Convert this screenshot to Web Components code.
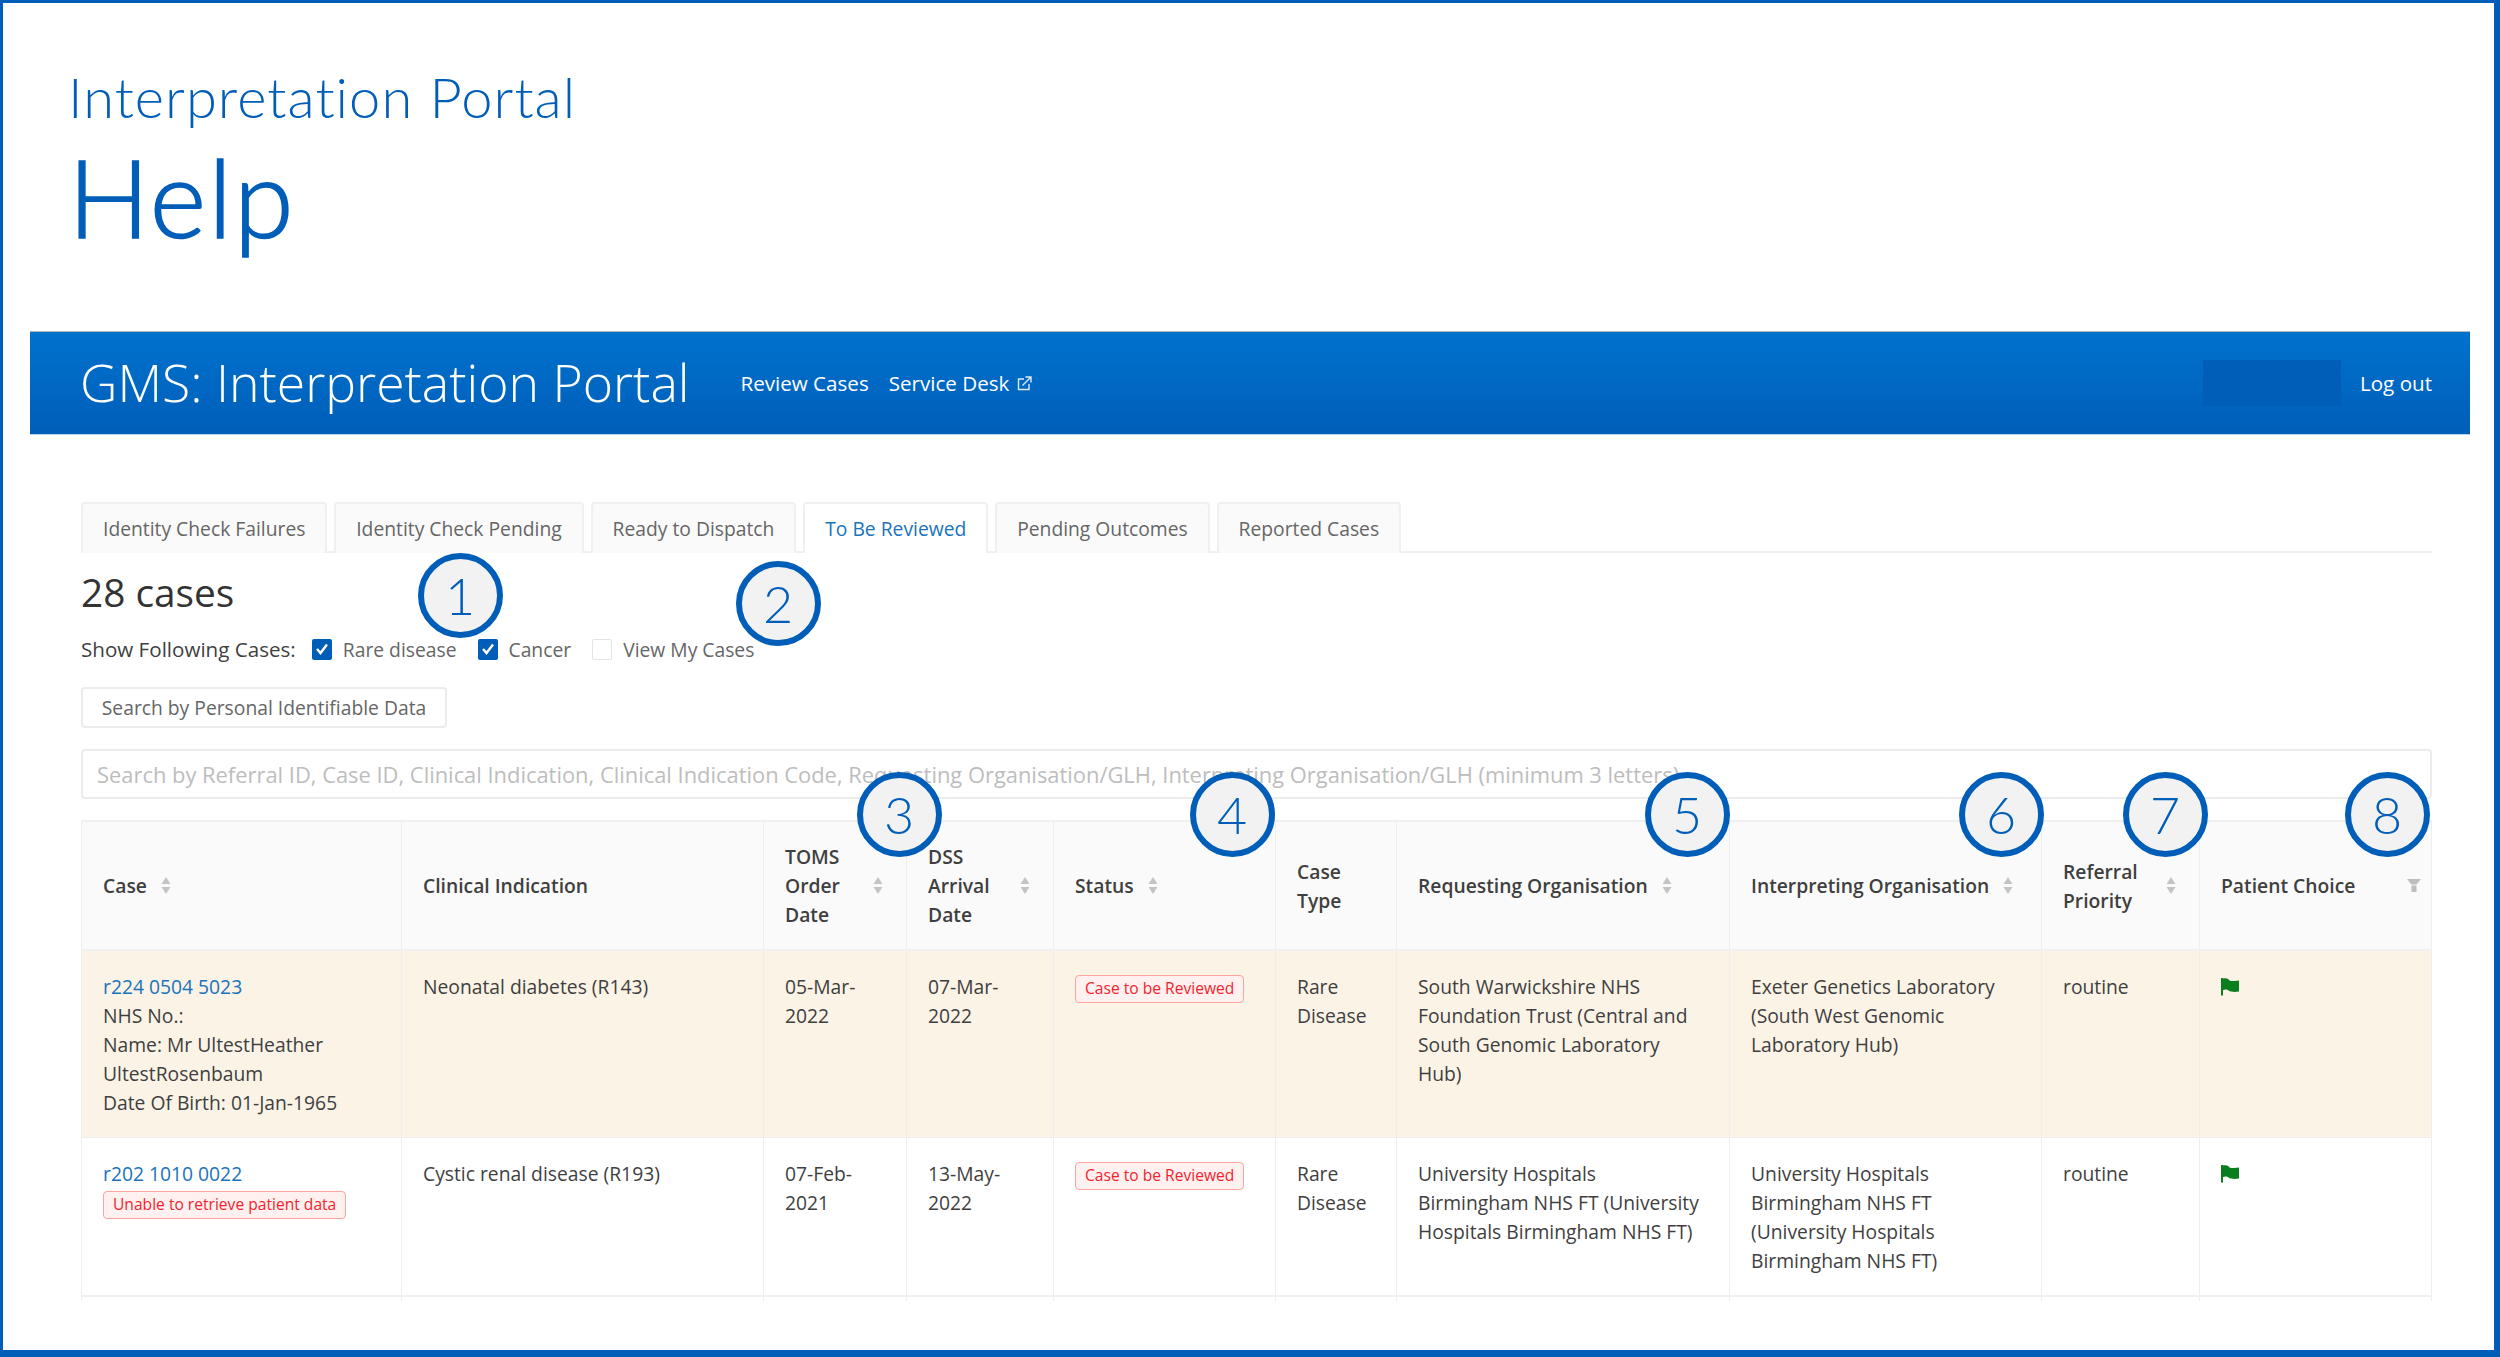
<!DOCTYPE html>
<html lang="en">
<head>
<meta charset="utf-8">
<title>Interpretation Portal Help</title>
<style>
  html, body { margin: 0; padding: 0; background: #fff; }
  body { font-family: "Open Sans", "Liberation Sans", sans-serif; color: #3f3f3f; }
</style>
</head>
<body>
<help-page>
  <help-title></help-title>
  <portal-nav></portal-nav>
  <case-tabs></case-tabs>
  <case-filters></case-filters>
  <case-table></case-table>

  <!-- numbered callouts sit over the screenshot -->
  <help-marker n="1" x="460" y="595"></help-marker>
  <help-marker n="2" x="778" y="603"></help-marker>
  <help-marker n="3" x="899" y="814"></help-marker>
  <help-marker n="4" x="1232" y="814"></help-marker>
  <help-marker n="5" x="1687" y="814"></help-marker>
  <help-marker n="6" x="2001" y="814"></help-marker>
  <help-marker n="7" x="2165" y="814"></help-marker>
  <help-marker n="8" x="2387" y="814"></help-marker>
</help-page>

<script>
class HelpPage extends HTMLElement {
    constructor() {
        super();
        this.attachShadow({ mode: 'open' });
    }
    connectedCallback() {
        this.shadowRoot.innerHTML = `
            <style>
                :host {
                    display: block;
                    position: relative;
                    box-sizing: border-box;
                    width: 2500px;
                    height: 1357px;
                    overflow: hidden;
                    border-style: solid;
                    border-color: #005eb8;
                    border-width: 3px 6px 7px 3px;
                    background: #fff;
                }
            </style>
            <slot></slot>
        `;
    }
}

class HelpTitle extends HTMLElement {
    constructor() {
        super();
        this.attachShadow({ mode: 'open' });
    }
    connectedCallback() {
        this.shadowRoot.innerHTML = `
            <style>
                :host {
                    display: block;
                    box-sizing: border-box;
                    height: 328px;
                    padding: 59px 0 0 68px;
                    color: #005eb8;
                    font-family: Lato, "Open Sans", sans-serif;
                    font-weight: 300;
                }
                div { white-space: nowrap; }
                .sub { font-size: 56px; line-height: 70px; letter-spacing: 1.05px; margin-left: -3px; }
                /* no Lato weight between light and regular, so the light one gets a thin stroke */
                .main { font-size: 108px; line-height: 118px; margin: 5px 0 0 -3px; letter-spacing: 2px; -webkit-text-stroke: 1.6px #005eb8; }
            </style>
            <div class="sub">Interpretation Portal</div>
            <div class="main">Help</div>
        `;
    }
}

class PortalNav extends HTMLElement {
    constructor() {
        super();
        this.attachShadow({ mode: 'open' });
    }
    connectedCallback() {
        this.shadowRoot.innerHTML = `
            <style>
                :host {
                    display: flex;
                    align-items: center;
                    box-sizing: border-box;
                    height: 104px;
                    margin: 0 24px 0 27px;
                    padding: 0 38px 0 50px;
                    color: #fff;
                    background: linear-gradient(#0072ce, #005eb8);
                    border-top: 1px solid #b4b9be;
                    border-bottom: 1px solid #b9d5ee;
                    font-family: "Open Sans", sans-serif;
                }
                .brand { font-size: 51.7px; font-weight: 300; white-space: nowrap; margin: -2px 51px 0 0; }
                .link { font-size: 20.6px; font-weight: 500; margin-right: 20px; white-space: nowrap; display: flex; align-items: center; gap: 8px; }
                .spacer { flex: 1; }
                .user { width: 138px; height: 46px; background: #005eb8; margin-right: 19px; }
                .logout { font-size: 20.6px; font-weight: 500; }
                svg { display: block; }
            </style>
            <div class="brand">GMS: Interpretation Portal</div>
            <span class="link">Review Cases</span>
            <span class="link">Service Desk
                <svg width="15" height="15" viewBox="0 0 15 15" fill="none" stroke="#dfeaf6" stroke-width="1.4">
                    <path d="M7 3H1.5V13.5H12V8"/>
                    <path d="M5.5 9.5L13.5 1.5M8.5 1H14V6.5"/>
                </svg>
            </span>
            <span class="spacer"></span>
            <span class="user"></span>
            <span class="logout">Log out</span>
        `;
    }
}

class CaseTabs extends HTMLElement {
    constructor() {
        super();
        this.attachShadow({ mode: 'open' });
    }
    connectedCallback() {
        const tabs = ['Identity Check Failures', 'Identity Check Pending', 'Ready to Dispatch',
            'To Be Reviewed', 'Pending Outcomes', 'Reported Cases'];
        this.shadowRoot.innerHTML = `
            <style>
                :host {
                    display: flex;
                    gap: 6.8px;
                    box-sizing: border-box;
                    height: 51px;
                    margin: 67px 62px 0 78px;
                    border-bottom: 2px solid #f0f0f0;
                    font-size: 19.3px;
                    color: #666;
                }
                .tab {
                    box-sizing: border-box;
                    height: 51px;
                    padding: 0 20px;
                    display: flex;
                    align-items: center;
                    white-space: nowrap;
                    background: #fafafa;
                    border: 2px solid #f0f0f0;
                    border-bottom: none;
                    border-radius: 4px 4px 0 0;
                }
                .tab.active { background: #fff; color: #1a73bc; }
            </style>
            ${tabs.map(t => `<div class="tab ${t === 'To Be Reviewed' ? 'active' : ''}">${t}</div>`).join('')}
        `;
    }
}

class CaseFilters extends HTMLElement {
    constructor() {
        super();
        this.attachShadow({ mode: 'open' });
    }
    connectedCallback() {
        const tick = `<svg width="14" height="12" viewBox="0 0 14 12" fill="none" stroke="#fff" stroke-width="2.4"><path d="M2 6L5.5 10L12 1.5"/></svg>`;
        this.shadowRoot.innerHTML = `
            <style>
                :host {
                    display: block;
                    margin: 0 62px 0 78px;
                    font-size: 19.3px;
                    color: #666;
                }
                h2 { margin: 0; padding-top: 11px; font-size: 38.8px; line-height: 56px; font-weight: 400; color: #333; }
                .row { display: flex; align-items: center; height: 28px; margin-top: 15px; }
                .label { color: #3f3f3f; margin-right: 16px; font-size: 20.6px; font-weight: 500; white-space: nowrap; }
                .box {
                    box-sizing: border-box;
                    width: 20px; height: 21px;
                    margin-right: 11px;
                    border-radius: 2px;
                    display: flex; align-items: center; justify-content: center;
                    background: #005eb8;
                }
                .box.off { background: #fff; border: 1.5px solid #e4e4e4; }
                .opt { margin-right: 21px; white-space: nowrap; }
                button {
                    display: block;
                    box-sizing: border-box;
                    width: 366px; height: 41px;
                    margin-top: 24px;
                    padding: 0;
                    background: #fff;
                    border: 2px solid #ececec;
                    border-radius: 4px;
                    font: inherit;
                    color: #666;
                }
                .search {
                    box-sizing: border-box;
                    height: 50px;
                    margin-top: 21px;
                    padding: 0 14px;
                    display: flex; align-items: center;
                    border: 2px solid #ececec;
                    border-radius: 4px;
                    font-size: 21.9px;
                    color: #bdbdbd;
                    white-space: nowrap;
                    overflow: hidden;
                }
            </style>
            <h2>28 cases</h2>
            <div class="row">
                <span class="label">Show Following Cases:</span>
                <span class="box">${tick}</span><span class="opt">Rare disease</span>
                <span class="box">${tick}</span><span class="opt">Cancer</span>
                <span class="box off"></span><span class="opt">View My Cases</span>
            </div>
            <button type="button">Search by Personal Identifiable Data</button>
            <div class="search">Search by Referral ID, Case ID, Clinical Indication, Clinical Indication Code, Requesting Organisation/GLH, Interpreting Organisation/GLH (minimum 3 letters)</div>
        `;
    }
}

class SortCaret extends HTMLElement {
    constructor() {
        super();
        this.attachShadow({ mode: 'open' });
    }
    connectedCallback() {
        this.shadowRoot.innerHTML = `
            <style>
                :host { display: block; flex: none; width: 10px; height: 17px; }
                svg { display: block; }
            </style>
            <svg width="10" height="17" viewBox="0 0 10 17" fill="#c4c4c4">
                <path d="M5 0L9.5 7H.5Z"/>
                <path d="M5 17L9.5 10H.5Z"/>
            </svg>
        `;
    }
}

class FilterIcon extends HTMLElement {
    constructor() {
        super();
        this.attachShadow({ mode: 'open' });
    }
    connectedCallback() {
        this.shadowRoot.innerHTML = `
            <style>
                :host { display: block; flex: none; width: 14px; height: 13px; }
                svg { display: block; }
            </style>
            <svg width="14" height="13" viewBox="0 0 14 13" fill="#bdbdbd">
                <path d="M0 0H14L9.5 5.5H4.5Z"/>
                <path d="M4.5 6.5H9.5V13H4.5Z"/>
            </svg>
        `;
    }
}

class FlagIcon extends HTMLElement {
    constructor() {
        super();
        this.attachShadow({ mode: 'open' });
    }
    connectedCallback() {
        this.shadowRoot.innerHTML = `
            <style>
                :host { display: block; width: 18px; height: 18px; margin-top: 6px; }
                svg { display: block; }
            </style>
            <svg width="18" height="18" viewBox="0 0 18 18" fill="#0a7d1e">
                <path d="M0 0H2V17.5H0Z"/>
                <path d="M2 .5C5 -.3 7 .2 8.5 2.4C10.5 3.4 15 3.2 18 2.6V13.5C15 14 10.5 14.2 8.5 13C6.5 11.2 4.5 11 2 12Z"/>
            </svg>
        `;
    }
}

class StatusTag extends HTMLElement {
    constructor() {
        super();
        this.attachShadow({ mode: 'open' });
    }
    connectedCallback() {
        this.shadowRoot.innerHTML = `
            <style>
                :host {
                    display: block;
                    width: max-content;
                    box-sizing: border-box;
                    height: 28px;
                    padding: 0 9px;
                    line-height: 25px;
                    font-size: 15.6px;
                    white-space: nowrap;
                    color: #f5222d;
                    background: #fff1f0;
                    border: 1.5px solid #ffa39e;
                    border-radius: 4px;
                }
            </style>
            <slot></slot>
        `;
    }
}

class CaseTable extends HTMLElement {
    constructor() {
        super();
        this.attachShadow({ mode: 'open' });
    }
    connectedCallback() {
        const widths = [321, 362, 143, 147, 222, 121, 333, 312, 158, 232];
        const heads = [
            ['Case', 'sort'], ['Clinical Indication', ''], ['TOMS Order Date', 'sort'],
            ['DSS Arrival Date', 'sort'], ['Status', 'sort'], ['Case Type', ''],
            ['Requesting Organisation', 'sort'], ['Interpreting Organisation', 'sort'],
            ['Referral Priority', 'sort'], ['Patient Choice', 'filter']
        ];
        const tag = '<status-tag>Case to be Reviewed</status-tag>';
        const flag = '<flag-icon></flag-icon>';
        const rows = [
            ['warn', `<a>r224 0504 5023</a><br>NHS No.:<br>Name: Mr UltestHeather UltestRosenbaum<br>Date Of Birth: 01-Jan-1965`,
                'Neonatal diabetes (R143)', '05-Mar-2022', '07-Mar-2022', tag, 'Rare Disease',
                'South Warwickshire NHS Foundation Trust (Central and South Genomic Laboratory Hub)',
                'Exeter Genetics Laboratory (South West Genomic Laboratory Hub)', 'routine', flag],
            ['', `<a>r202 1010 0022</a><br><status-tag>Unable to retrieve patient data</status-tag>`,
                'Cystic renal disease (R193)', '07-Feb-2021', '13-May-2022', tag, 'Rare Disease',
                'University Hospitals Birmingham NHS FT (University Hospitals Birmingham NHS FT)',
                'University Hospitals Birmingham NHS FT (University Hospitals Birmingham NHS FT)', 'routine', flag]
        ];
        const headCell = ([text, kind]) => {
            const icon = kind === 'sort' ? '<sort-caret></sort-caret>' : kind === 'filter' ? '<filter-icon></filter-icon>' : '';
            return `<th><div class="head ${kind === 'filter' ? 'filter' : ''}"><span>${text}</span>${icon}</div></th>`;
        };
        this.shadowRoot.innerHTML = `
            <style>
                :host {
                    display: block;
                    margin: 21px 62px 0 78px;
                    font-size: 19.3px;
                    line-height: 29px;
                    color: #3f3f3f;
                }
                table { width: 2351px; table-layout: fixed; border-collapse: separate; border-spacing: 0; }
                th, td {
                    box-sizing: border-box;
                    padding: 21px;
                    vertical-align: top;
                    text-align: left;
                    border-right: 1px solid #eeeeee;
                    border-bottom: 1px solid #eeeeee;
                }
                td { padding-bottom: 0; }
                tr > :first-child { border-left: 1px solid #eeeeee; }
                thead th {
                    height: 131px;
                    padding: 0 23px 0 21px;
                    vertical-align: middle;
                    font-weight: 600;
                    background: #fafafa;
                    border-top: 2px solid #f0f0f0;
                    border-bottom: 2px solid #f0f0f0;
                }
                .head { display: flex; align-items: center; gap: 14px; }
                .head.filter { justify-content: space-between; margin-right: -13px; }
                tr.warn td { background: #fbf3e6; height: 187px; }
                tbody tr:last-child td { height: 159px; border-bottom: 2px solid #f0f0f0; }
                tr.tail td { height: 4px; padding: 0; border-bottom: none; font-size: 0; line-height: 0; }
                a { color: #1a73bc; }
                td.st { padding-top: 24px; }
                td:first-child status-tag { margin-top: 3px; }
            </style>
            <table>
                <colgroup>${widths.map(w => `<col style="width:${w}px">`).join('')}</colgroup>
                <thead><tr>${heads.map(headCell).join('')}</tr></thead>
                <tbody>
                    ${rows.map(([cls, ...cells]) => `<tr class="${cls}">${cells.map((c, i) => `<td class="${i === 4 ? 'st' : ''}">${c}</td>`).join('')}</tr>`).join('')}
                </tbody>
                <tfoot><tr class="tail">${widths.map(() => '<td></td>').join('')}</tr></tfoot>
            </table>
        `;
    }
}

class HelpMarker extends HTMLElement {
    constructor() {
        super();
        this.attachShadow({ mode: 'open' });
    }
    connectedCallback() {
        // x and y are the centre on the page, the host's offset parent starts inside the blue frame
        const x = Number(this.getAttribute('x')) - 3;
        const y = Number(this.getAttribute('y')) - 3;
        this.shadowRoot.innerHTML = `
            <style>
                :host {
                    position: absolute;
                    left: ${x - 42.5}px;
                    top: ${y - 42.5}px;
                    box-sizing: border-box;
                    width: 85px;
                    height: 85px;
                    display: flex;
                    align-items: center;
                    justify-content: center;
                    border: 6.5px solid #005eb8;
                    border-radius: 50%;
                    background: #f2f2f2;
                    color: #005eb8;
                    font-family: Lato, "Open Sans", sans-serif;
                    font-weight: 300;
                    font-size: 52px;
                    line-height: 1;
                }
            </style>
            ${this.getAttribute('n')}
        `;
    }
}

customElements.define('help-page', HelpPage);
customElements.define('help-title', HelpTitle);
customElements.define('portal-nav', PortalNav);
customElements.define('case-tabs', CaseTabs);
customElements.define('case-filters', CaseFilters);
customElements.define('sort-caret', SortCaret);
customElements.define('filter-icon', FilterIcon);
customElements.define('flag-icon', FlagIcon);
customElements.define('status-tag', StatusTag);
customElements.define('case-table', CaseTable);
customElements.define('help-marker', HelpMarker);
</script>
</body>
</html>
